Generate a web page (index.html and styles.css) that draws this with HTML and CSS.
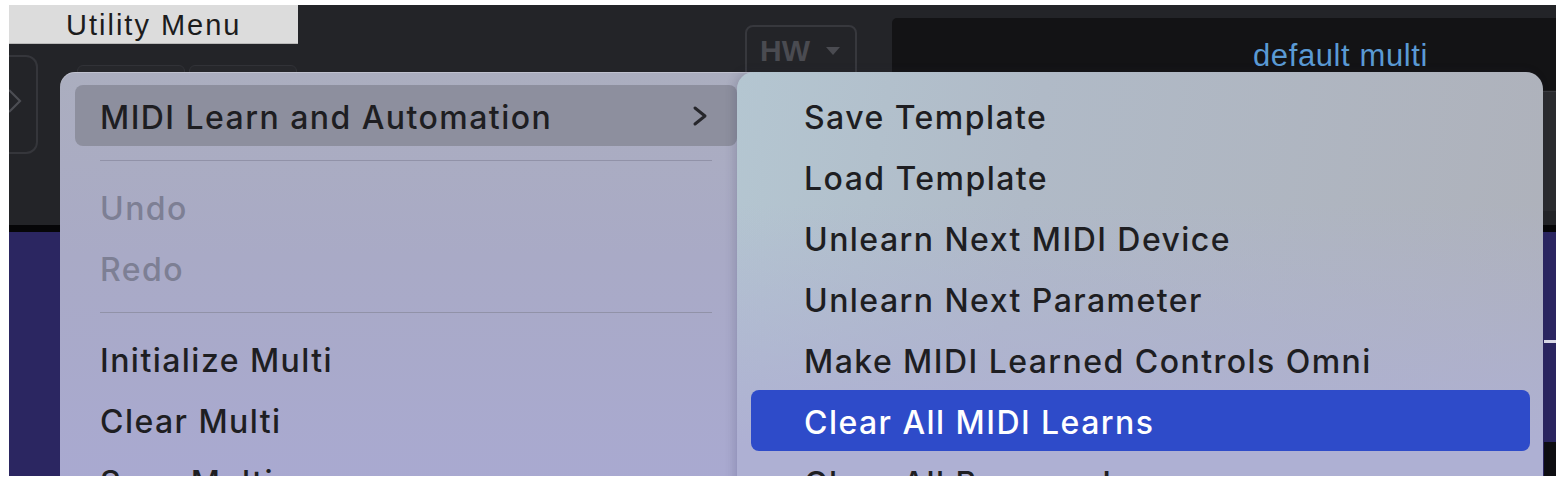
FILE: index.html
```html
<!DOCTYPE html>
<html lang="en">
<head>
<meta charset="utf-8">
<title>Utility Menu</title>
<link rel="stylesheet" href="styles.css">
</head>
<body>
<div class="frame">
  <header class="topbar">
    <div class="left-col">
      <div class="tab">Utility Menu</div>
      <div class="left-tools">
        <div class="side-btn">
          <svg class="side-chev" width="16" height="26" viewBox="0 0 16 26"><polyline points="2,2 13,13 2,24" fill="none" stroke="#4c4d53" stroke-width="2.2"/></svg>
        </div>
        <div class="tool-btn tool-first"></div>
        <div class="tool-btn"></div>
      </div>
    </div>
    <div class="hw-btn"><span class="hw-label">HW</span><svg width="14" height="8" viewBox="0 0 14 8"><polygon points="0,0 14,0 7,8" fill="#4a4b51"/></svg></div>
    <div class="display">
      <div class="display-screen"><span class="display-title">default multi</span></div>
      <div class="display-sub"></div>
    </div>
  </header>
  <div class="divider"></div>
  <main class="workspace">
    <div class="rack"></div>
    <div class="right-panel">
      <div class="rp-a"></div>
      <div class="rp-line"></div>
      <div class="rp-b"></div>
      <div class="rp-c"></div>
    </div>
  </main>

  <div class="menu main-menu">
    <div class="item active">
      <span>MIDI Learn and Automation</span>
      <svg class="chev" width="16" height="22" viewBox="0 0 16 22"><polyline points="3,3 13,11 3,19" fill="none" stroke="#26262b" stroke-width="3" stroke-linecap="round" stroke-linejoin="round"/></svg>
    </div>
    <div class="sep"></div>
    <div class="item disabled">Undo</div>
    <div class="item disabled">Redo</div>
    <div class="sep"></div>
    <div class="item">Initialize Multi</div>
    <div class="item">Clear Multi</div>
    <div class="item">Save Multi</div>
  </div>

  <div class="menu sub-menu">
    <div class="item">Save Template</div>
    <div class="item">Load Template</div>
    <div class="item">Unlearn Next MIDI Device</div>
    <div class="item">Unlearn Next Parameter</div>
    <div class="item">Make MIDI Learned Controls Omni</div>
    <div class="item selected">Clear All MIDI Learns</div>
    <div class="item">Clear All Browser Learns</div>
  </div>
</div>
</body>
</html>
```

FILE: styles.css
```css
html, body {
  margin: 0;
  padding: 0;
  background: #ffffff;
}

.frame {
  position: relative;
  margin: 5px 0 0 9px;
  width: 1547px;
  height: 471px;
  overflow: hidden;
  background: #232428;
  display: flex;
  flex-direction: column;
  font-family: "Liberation Sans", Arial, sans-serif;
}

/* ---------- top bar ---------- */
.topbar {
  height: 220px;
  display: flex;
  align-items: flex-start;
  background: #232428;
}

.left-col {
  width: 289px;
  display: flex;
  flex-direction: column;
}

.tab {
  height: 38px;
  background: #dcdcdc;
  border-bottom: 1px solid #b9b9b9;
  box-sizing: content-box;
  padding-left: 57px;
  font-size: 29px;
  letter-spacing: 2px;
  line-height: 40px;
  color: #1c1c1c;
}

.left-tools {
  display: flex;
  margin-top: 11px;
  align-items: flex-start;
}

.side-btn {
  width: 27px;
  height: 95px;
  border: 2px solid #35363b;
  border-left: none;
  border-radius: 0 12px 12px 0;
  display: flex;
  align-items: center;
  overflow: hidden;
}

.side-chev {
  margin-left: -2px;
  margin-top: -8px;
}

.tool-btn {
  width: 106px;
  height: 60px;
  margin-top: 10px;
  margin-left: 4px;
  border: 1px solid #313237;
  border-radius: 6px;
  background: #26272b;
}
.tool-btn.tool-first { margin-left: 39px; }

.hw-btn {
  margin-left: 447px;
  margin-top: 20px;
  width: 95px;
  height: 60px;
  border: 2px solid #37383d;
  border-radius: 8px;
  display: flex;
  align-items: center;
  gap: 16px;
  padding-left: 13px;
  box-sizing: content-box;
}

.hw-label {
  font-size: 30px;
  font-weight: bold;
  color: #4a4b51;
  margin-top: -12px;
}
.hw-btn svg { margin-top: -12px; }

.display {
  margin-left: 35px;
  margin-top: 13px;
  flex: 1;
  display: flex;
  flex-direction: column;
}

.display-screen {
  height: 72px;
  background: #131315;
  border-radius: 5px 0 0 0;
  padding-left: 361px;
  box-sizing: border-box;
}

.display-title {
  display: inline-block;
  margin-top: 22px;
  font-size: 31px;
  letter-spacing: 0.6px;
  color: #5a9ad4;
  line-height: 32px;
}

.display-sub {
  height: 120px;
  background: #2a2b2f;
  border-top: 1px solid #1b1b1d;
  box-shadow: inset 0 33px 0 -32px #3a3b40;
}

.divider {
  height: 7px;
  background: #060608;
}

.workspace {
  flex: 1;
  display: flex;
  background: #2b2661;
}

.rack { flex: 1; }

.right-panel {
  width: 12px;
  display: flex;
  flex-direction: column;
}
.rp-a { height: 108px; background: #2b2661; }
.rp-line { height: 3px; background: #d9d9e6; }
.rp-b { height: 99px; background: #2a2560; }
.rp-c { flex: 1; background: #0e0e12; }

/* ---------- menus ---------- */
.menu {
  position: absolute;
  top: 67px;
  display: flex;
  flex-direction: column;
  font-family: Inter, "Noto Sans", sans-serif;
  font-size: 32px;
  font-weight: 500;
  letter-spacing: 1.45px;
  color: #1e1e22;
  box-sizing: border-box;
}

.main-menu {
  left: 51px;
  width: 720px;
  height: 460px;
  padding: 13px 0 0 15px;
  border-radius: 15px 15px 0 0;
  background: linear-gradient(180deg, #abaebf 0%, #a9aac6 40%, #a9a9d3 100%);
  box-shadow: inset 0 1px 0 rgba(255,255,255,0.25);
}

.main-menu .item {
  width: 662px;
  height: 61px;
  flex: none;
  display: flex;
  align-items: center;
  justify-content: space-between;
  padding: 3px 29px 0 25px;
  box-sizing: border-box;
  border-radius: 8px;
}

.main-menu .item .chev { margin-top: -3px; }

.main-menu .item.active {
  background: #8d8f9e;
}

.main-menu .item.disabled {
  color: #7d7f94;
}

.sep {
  flex: none;
  height: 30px;
  width: 612px;
  margin-left: 25px;
  background: linear-gradient(#0000 14px, #9192a8 14px, #9192a8 15px, #0000 15px);
}

.sub-menu {
  left: 728px;
  width: 806px;
  height: 440px;
  padding: 13px 13px 0 14px;
  border-radius: 17px 17px 0 0;
  background:
    linear-gradient(180deg, rgba(174,176,211,0) 30%, rgba(174,176,211,1) 85%),
    linear-gradient(100deg, #b4c6d1 0%, #b0bac7 35%, #aeb1ba 100%);
  box-shadow: -3px 0 10px rgba(40,40,70,0.18);
}

.sub-menu .item {
  height: 61px;
  flex: none;
  display: flex;
  align-items: center;
  padding: 3px 0 0 53px;
  box-sizing: border-box;
  border-radius: 8px;
}

.sub-menu .item.selected {
  background: #2e4bc9;
  color: #ffffff;
}
```
